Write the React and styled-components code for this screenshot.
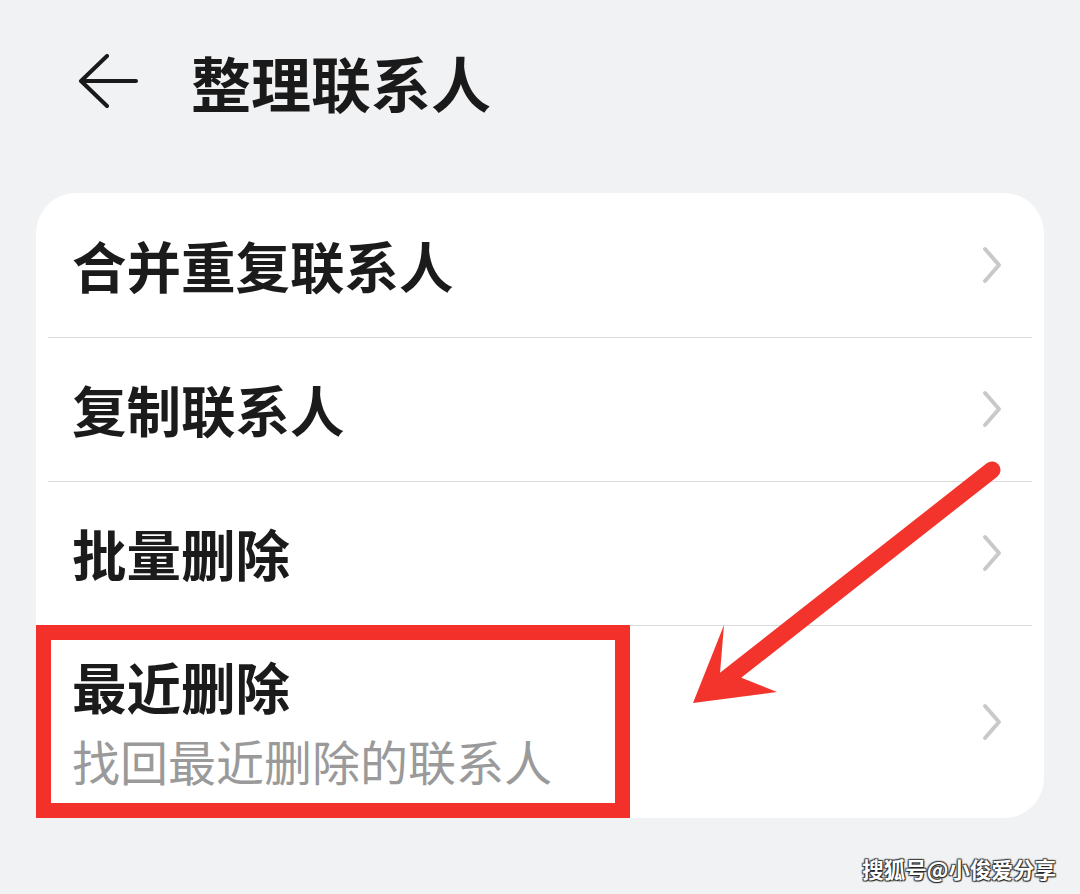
import styled, { createGlobalStyle } from "styled-components";

const rows = [
  { title: "合并重复联系人" },
  { title: "复制联系人" },
  { title: "批量删除" },
  { title: "最近删除", subtitle: "找回最近删除的联系人", marked: true },
];

export default function App() {
  return (
    <Page>
      <GlobalStyle />
      <Header>
        <BackButton aria-label="返回">
          <svg width="60" height="56" viewBox="0 0 60 56" fill="none">
            <path
              d="M58 27H4M29 2L3 27L29 52"
              stroke="#1a1a1a"
              strokeWidth="4"
              strokeLinecap="round"
              strokeLinejoin="round"
            />
          </svg>
        </BackButton>
        <Title>整理联系人</Title>
      </Header>

      <Card>
        {rows.map((row, i) => (
          <Row key={row.title} $tall={!!row.subtitle}>
            {i > 0 && <Divider />}
            <RowText>
              <RowTitle>{row.title}</RowTitle>
              {row.subtitle && <RowSubtitle>{row.subtitle}</RowSubtitle>}
            </RowText>
            <Chevron width="20" height="38" viewBox="0 0 20 38" fill="none">
              <path
                d="M3 3L17 19L3 35"
                stroke="#c9c9c9"
                strokeWidth="4"
                strokeLinecap="round"
                strokeLinejoin="round"
              />
            </Chevron>
            {row.marked && <HighlightBox />}
          </Row>
        ))}
      </Card>

      <Pointer width="1080" height="894" viewBox="0 0 1080 894">
        <line
          x1="992"
          y1="470"
          x2="722"
          y2="682"
          stroke="#f3342c"
          strokeWidth="17"
          strokeLinecap="round"
        />
        <path
          d="M693 703L724 625L720 673L737 676L777 692Z"
          fill="#f3342c"
        />
      </Pointer>

      <Watermark>搜狐号@小俊爱分享</Watermark>
    </Page>
  );
}

const GlobalStyle = createGlobalStyle`
  html, body {
    margin: 0;
    padding: 0;
    background: #f1f2f4;
  }

  body {
    font-family: "Noto Sans CJK SC", "Noto Sans", sans-serif;
    color: #1a1a1a;
  }
`;

const Page = styled.main`
  position: relative;
  width: 1080px;
  height: 894px;
  overflow: hidden;
  background: #f1f2f4;
  padding: 0 36px;
  box-sizing: border-box;
`;

const Header = styled.header`
  height: 164px;
  display: flex;
  align-items: center;
  padding-left: 42px;
  margin-bottom: 29px;
`;

const BackButton = styled.div`
  display: flex;
  width: 60px;
  height: 56px;
  margin-right: 53px;
`;

const Title = styled.h1`
  margin: 0;
  font-size: 60px;
  font-weight: 600;
  line-height: 1;
  color: #1a1a1a;
`;

const Card = styled.section`
  background: #ffffff;
  border-radius: 40px;
`;

const Row = styled.div`
  position: relative;
  height: ${(p) => (p.$tall ? "193px" : "144px")};
  display: flex;
  align-items: center;
  justify-content: space-between;
  padding: 0 42px 0 36px;
  box-sizing: border-box;
`;

const Divider = styled.div`
  position: absolute;
  top: 0;
  left: 12px;
  right: 12px;
  height: 1px;
  background: #dcdcdc;
`;

const RowText = styled.div`
  display: flex;
  flex-direction: column;
  gap: 22px;
`;

const RowTitle = styled.div`
  font-size: 54.5px;
  font-weight: 700;
  line-height: 1;
  color: #1b1b1b;
`;

const RowSubtitle = styled.div`
  font-size: 48px;
  font-weight: 400;
  line-height: 1;
  color: #9a9a9a;
`;

const Chevron = styled.svg`
  flex-shrink: 0;
`;

const HighlightBox = styled.div`
  position: absolute;
  left: 0;
  top: 0;
  bottom: 0;
  width: 594px;
  border: 15px solid #f3302a;
  box-sizing: border-box;
`;

const Pointer = styled.svg`
  position: absolute;
  left: 0;
  top: 0;
  pointer-events: none;
`;

const Watermark = styled.div`
  position: absolute;
  right: 24px;
  bottom: 10px;
  font-size: 21.5px;
  font-weight: 700;
  color: #ffffff;
  text-shadow: 1px 1px 1px #222, -1px -1px 1px #444, 1px -1px 1px #444,
    -1px 1px 1px #444;
`;
